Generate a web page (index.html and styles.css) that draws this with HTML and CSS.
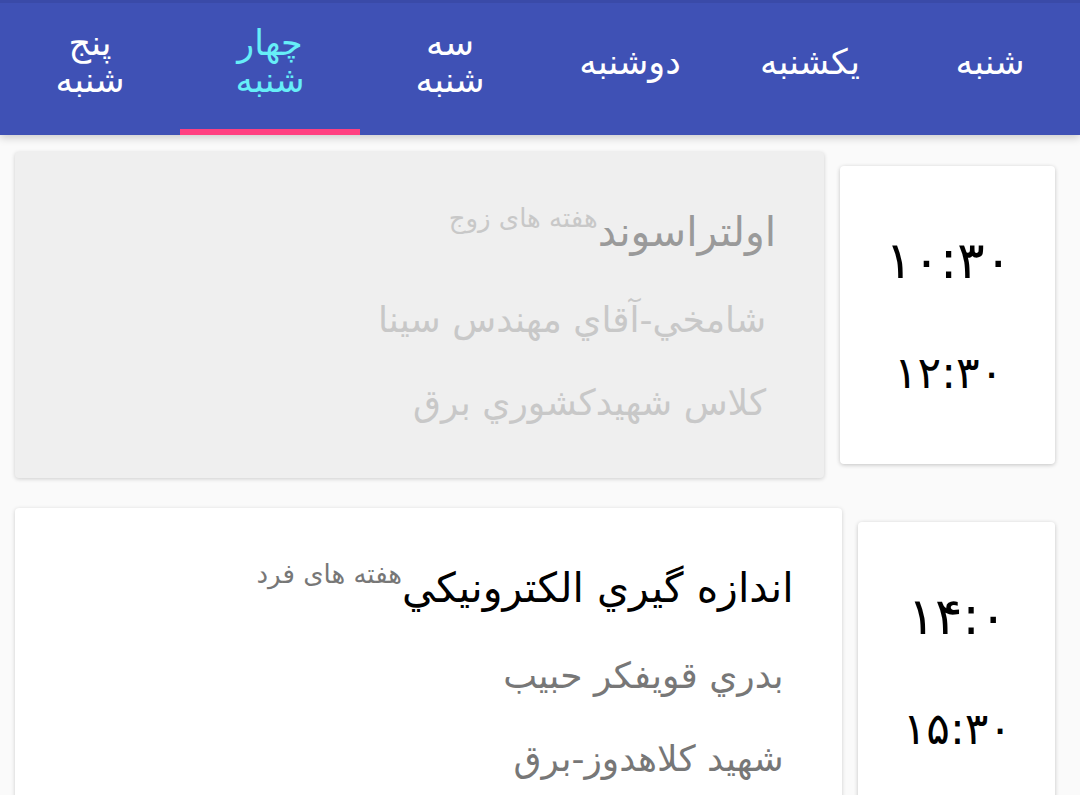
FILE: index.html
```html
<!DOCTYPE html>
<html lang="fa" dir="rtl">
<head>
<meta charset="utf-8">
<title>برنامه هفتگی</title>
<link rel="stylesheet" href="styles.css">
</head>
<body>
<header class="tabbar">
  <div class="tab"><span>شنبه</span></div>
  <div class="tab"><span>یکشنبه</span></div>
  <div class="tab"><span>دوشنبه</span></div>
  <div class="tab"><span>سه<br>شنبه</span></div>
  <div class="tab tab-active"><span>چهار<br>شنبه</span></div>
  <div class="tab"><span>پنج<br>شنبه</span></div>
</header>
<main class="list">
  <section class="row">
    <div class="time-card">
      <div class="time-start">۱۰:۳۰</div>
      <div class="time-end">۱۲:۳۰</div>
    </div>
    <div class="class-card class-card-past">
      <div class="title-line">
        <span class="title">اولتراسوند</span>
        <span class="week">هفته های زوج</span>
      </div>
      <div class="info">شامخي-آقاي مهندس سينا</div>
      <div class="info">كلاس شهيدكشوري برق</div>
    </div>
  </section>
  <section class="row">
    <div class="time-card">
      <div class="time-start">۱۴:۰</div>
      <div class="time-end">۱۵:۳۰</div>
    </div>
    <div class="class-card">
      <div class="title-line">
        <span class="title">اندازه گيري الكترونيكي</span>
        <span class="week">هفته های فرد</span>
      </div>
      <div class="info">بدري قويفكر حبيب</div>
      <div class="info">شهيد كلاهدوز-برق</div>
    </div>
  </section>
</main>
</body>
</html>
```
FILE: styles.css
```css
* { box-sizing: border-box; }
html, body {
  margin: 0;
  padding: 0;
  height: 795px;
  overflow: hidden;
}
body {
  background: #fafafa;
  font-family: "DejaVu Sans", sans-serif;
  direction: rtl;
}
.tabbar {
  display: flex;
  height: 135px;
  background: #3f51b5;
  border-top: 3px solid #3a4aa8;
  box-shadow: 0 3px 8px rgba(0,0,0,0.18);
  position: relative;
  z-index: 1;
}
.tab {
  flex: 1;
  display: flex;
  align-items: center;
  justify-content: center;
  color: #ffffff;
  font-size: 35px;
  line-height: 37px;
  text-align: center;
  padding-bottom: 8px;
  border-bottom: 6px solid transparent;
}
.tab-active {
  color: #66eef8;
  border-bottom-color: #ff4081;
}
.list {
  padding: 17px 25px 0 15px;
}
.row {
  display: flex;
  align-items: center;
  gap: 16px;
  margin-bottom: 30px;
}
.time-card {
  flex: none;
  background: #ffffff;
  border-radius: 4px;
  box-shadow: 0 1px 4px rgba(0,0,0,0.22);
  padding: 60px 43px 61px 45px;
  display: flex;
  flex-direction: column;
  align-items: center;
  color: #000;
}
.time-start {
  font-size: 51px;
  line-height: 70px;
  letter-spacing: -6px;
}
.time-end {
  font-size: 44px;
  line-height: 60px;
  letter-spacing: -3px;
  margin-top: 47px;
}
.class-card {
  flex: 1;
  background: #ffffff;
  border-radius: 4px;
  box-shadow: 0 1px 4px rgba(0,0,0,0.18);
  padding: 48px 48px 34px;
}
.class-card-past {
  background: #efefef;
}
.title-line {
  display: flex;
  align-items: flex-start;
  height: 64px;
}
.title {
  font-size: 41px;
  line-height: 64px;
  color: #000;
}
.week {
  font-size: 26px;
  line-height: 36px;
  color: #777;
}
.info {
  font-size: 36px;
  line-height: 83px;
  color: #777;
  padding-right: 10px;
}
.title-line + .info { margin-top: 14px; }
.class-card-past .title { color: #9a9a9a; }
.class-card-past .week,
.class-card-past .info { color: #c8c8c8; }
```
